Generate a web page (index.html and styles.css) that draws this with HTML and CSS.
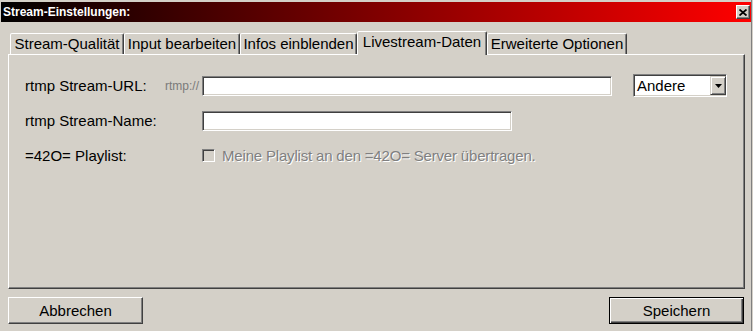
FILE: index.html
```html
<!DOCTYPE html>
<html lang="de">
<head>
    <meta charset="UTF-8">
    <meta name="viewport" content="width=device-width, initial-scale=1.0">
    <title>Stream-Einstellungen</title>
    <link rel="stylesheet" href="styles.css">
</head>
<body>
    <div id="window">
        <div class="titlebar">
            <span class="title">Stream-Einstellungen:</span>
            <button class="close">
                <svg width="8" height="7" viewBox="0 0 8 7"><path d="M0.5 0.5 L7.5 6.5 M7.5 0.5 L0.5 6.5" stroke="#000" stroke-width="1.8" fill="none"/></svg>
            </button>
        </div>

        <div class="tabs">
            <div class="tab t1">Stream-Qualität</div>
            <div class="tab t2">Input bearbeiten</div>
            <div class="tab t3">Infos einblenden</div>
            <div class="tab t4 active">Livestream-Daten</div>
            <div class="tab t5">Erweiterte Optionen</div>
        </div>

        <div class="panel">
            <div class="row">
                <label class="label">rtmp Stream-URL:</label>
                <span class="prefix">rtmp://</span>
                <input type="text" class="field url">
                <div class="combo">
                    <span class="combo-text">Andere</span>
                    <span class="combo-arrow">
                        <svg width="7" height="4" viewBox="0 0 7 4"><polygon points="0,0 7,0 3.5,4" fill="#000"/></svg>
                    </span>
                </div>
            </div>
            <div class="row">
                <label class="label wide">rtmp Stream-Name:</label>
                <input type="text" class="field name">
            </div>
            <div class="row">
                <label class="label wide">=42O= Playlist:</label>
                <span class="check"></span>
                <span class="check-label">Meine Playlist an den =42O= Server übertragen.</span>
            </div>
        </div>

        <div class="footer">
            <button class="btn">Abbrechen</button>
            <button class="btn default">Speichern</button>
        </div>
    </div>
</body>
</html>
```

FILE: styles.css
```css
body {
    margin: 0;
    background-color: #d4d0c8;
    font-family: 'Liberation Sans', Arial, sans-serif;
    font-size: 15px;
    color: #000;
}

#window {
    width: 752px;
    height: 331px;
    box-sizing: border-box;
    border-right: 1px solid #808080;
    padding-top: 2px;
    overflow: hidden;
}

.titlebar {
    height: 20px;
    margin-left: 1px;
    padding: 0 1px 0 2px;
    display: flex;
    align-items: center;
    justify-content: space-between;
    background: linear-gradient(to right, #000000, #ff0000);
}

.title {
    color: #fff;
    font-weight: bold;
    font-size: 12px;
}

.close {
    width: 14px;
    height: 14px;
    padding: 0;
    box-sizing: border-box;
    display: flex;
    align-items: center;
    justify-content: center;
    background-color: #d4d0c8;
    border: 1px solid;
    border-color: #fff #404040 #404040 #fff;
    box-shadow: inset -1px -1px #808080;
}

.tabs {
    display: flex;
    align-items: flex-start;
    height: 24px;
    margin: 9px 0 -1px 10px;
    position: relative;
    z-index: 1;
}

.tab {
    box-sizing: border-box;
    height: 21px;
    margin-top: 2px;
    border: 1px solid;
    border-bottom: none;
    border-color: #fff #404040 transparent #fff;
    border-radius: 2px 2px 0 0;
    box-shadow: inset -1px 0 #808080;
    background-color: #d4d0c8;
    line-height: 20px;
    text-align: center;
    white-space: nowrap;
}

.tab.active {
    height: 24px;
    margin-top: 0;
}

.t1 { width: 114px; }
.t2 { width: 116px; }
.t3 { width: 117px; }
.t4 { width: 130px; }
.t5 { width: 140px; }

.panel {
    margin-left: 8px;
    width: 737px;
    height: 235px;
    box-sizing: border-box;
    border: 1px solid;
    border-color: #fff #404040 #404040 #fff;
    box-shadow: inset -1px -1px #808080;
    padding: 13px 0 0 16px;
}

.row {
    display: flex;
    align-items: center;
    height: 35px;
}

.label {
    width: 140px;
    flex-shrink: 0;
}

.label.wide {
    width: 177px;
}

.prefix {
    width: 37px;
    font-size: 12px;
    color: #7a7a7a;
}

.field {
    box-sizing: border-box;
    height: 20px;
    padding: 0 3px;
    border: 1px solid;
    border-color: #808080 #fff #fff #808080;
    box-shadow: inset 1px 1px #404040, inset -1px -1px #d4d0c8;
    background-color: #fff;
    font: inherit;
    outline: none;
}

.field.url {
    width: 410px;
}

.field.name {
    width: 310px;
}

.combo {
    margin-left: 21px;
    width: 94px;
    height: 23px;
    box-sizing: border-box;
    display: flex;
    justify-content: space-between;
    padding: 1px 0 1px 3px;
    border: 1px solid;
    border-color: #808080 #fff #fff #808080;
    box-shadow: inset 1px 1px #404040, inset -1px -1px #d4d0c8;
    background-color: #fff;
}

.combo-text {
    display: flex;
    align-items: center;
}

.combo-arrow {
    width: 16px;
    box-sizing: border-box;
    display: flex;
    align-items: center;
    justify-content: center;
    background-color: #d4d0c8;
    border: 1px solid;
    border-color: #d4d0c8 #404040 #404040 #d4d0c8;
    box-shadow: inset 1px 1px #fff, inset -1px -1px #808080;
}

.check {
    width: 13px;
    height: 13px;
    box-sizing: border-box;
    border: 1px solid;
    border-color: #808080 #fff #fff #808080;
    box-shadow: inset 1px 1px #404040, inset -1px -1px #d4d0c8;
    background-color: #d4d0c8;
}

.check-label {
    margin-left: 7px;
    color: #808080;
    text-shadow: 1px 1px #fff;
    letter-spacing: -0.18px;
}

.footer {
    display: flex;
    justify-content: space-between;
    margin-top: 8px;
    padding: 0 7px 0 8px;
}

.btn {
    width: 135px;
    height: 27px;
    padding: 0;
    box-sizing: border-box;
    font: inherit;
    color: #000;
    background-color: #d4d0c8;
    border: 1px solid;
    border-color: #fff #404040 #404040 #fff;
    box-shadow: inset -1px -1px #808080;
}

.btn.default {
    border: 1px solid #000;
    box-shadow: inset 1px 1px #fff, inset -1px -1px #404040, inset -2px -2px #808080;
}
```
